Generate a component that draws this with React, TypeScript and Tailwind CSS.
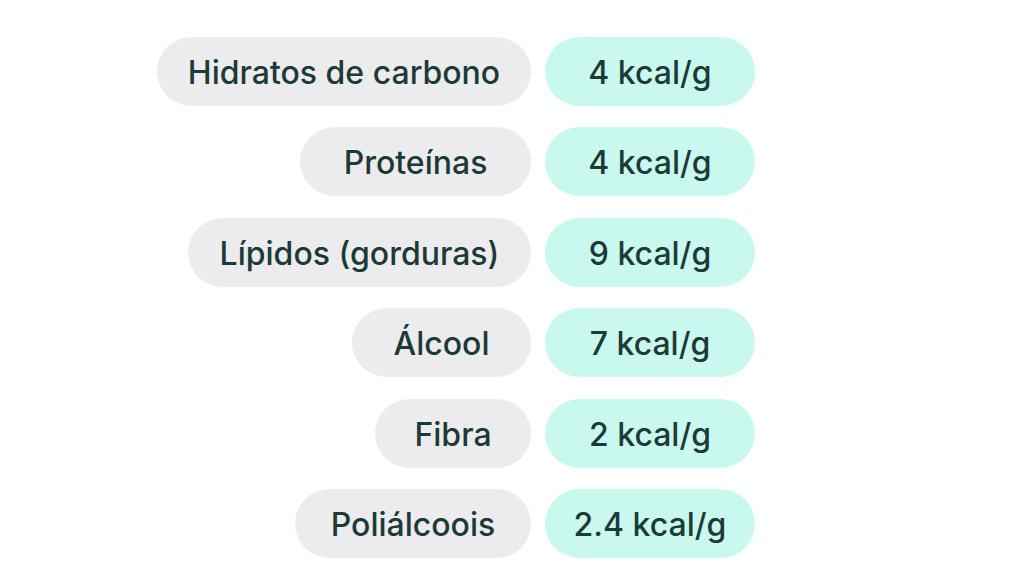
import React from "react";

const rows = [
  { label: "Hidratos de carbono", value: "4 kcal/g", w: "w-[374px]" },
  { label: "Proteínas", value: "4 kcal/g", w: "w-[231px]" },
  { label: "Lípidos (gorduras)", value: "9 kcal/g", w: "w-[343px]" },
  { label: "Álcool", value: "7 kcal/g", w: "w-[179px]" },
  { label: "Fibra", value: "2 kcal/g", w: "w-[156px]" },
  { label: "Poliálcoois", value: "2.4 kcal/g", w: "w-[236px]" },
];

export default function App() {
  return (
    <div
      className="w-[1024px] h-[587px] bg-white pt-[37px] flex flex-col gap-[21.4px]"
      style={{ fontFamily: "Inter, 'Noto Sans', sans-serif" }}
    >
      {rows.map((r) => (
        <div key={r.label} className="flex items-center">
          <div className="w-[531px] flex justify-end">
            <div
              className={`${r.w} h-[69px] pt-[3px] rounded-full bg-[#ececee] flex items-center justify-center text-[32px] font-medium text-[#1c3a36] whitespace-nowrap`}
            >
              {r.label}
            </div>
          </div>
          <div className="ml-[14px] w-[210px] h-[69px] pt-[3px] rounded-full bg-[#c9f9ee] flex items-center justify-center text-[32px] font-medium text-[#1c3a36] whitespace-nowrap">
            {r.value}
          </div>
        </div>
      ))}
    </div>
  );
}
